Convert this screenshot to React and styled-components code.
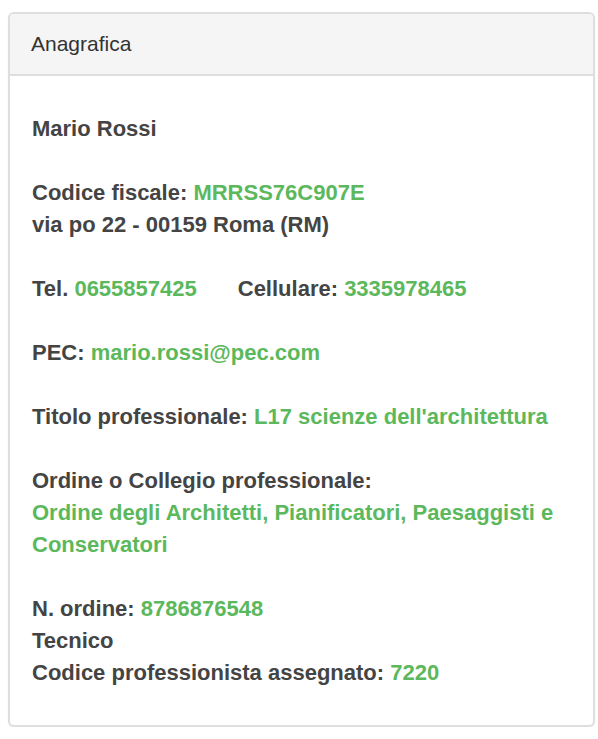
import styled, { createGlobalStyle } from 'styled-components';

const GlobalStyle = createGlobalStyle`
  html, body {
    margin: 0;
    padding: 0;
    background: #ffffff;
  }
  body {
    font-family: "Liberation Sans", Arial, sans-serif;
  }
`

const Panel = styled.section`
  box-sizing: border-box;
  width: 587px;
  margin: 12px 0 0 8px;
  border: 2px solid #dedede;
  border-radius: 6px;
  box-shadow: 0 1px 2px rgba(0, 0, 0, 0.06);
  background: #fff;
  overflow: hidden;
`

const PanelHeading = styled.header`
  box-sizing: border-box;
  height: 62px;
  padding: 0 21px;
  display: flex;
  align-items: center;
  background: #f5f5f5;
  border-bottom: 2px solid #dedede;
  color: #333;
  font-size: 21px;
`

const PanelBody = styled.div`
  padding: 37px 22px 36px;
  display: flex;
  flex-direction: column;
  gap: 32px;
  color: #444;
  font-size: 22px;
  font-weight: bold;
  line-height: 32px;
`

const Block = styled.div`
  display: flex;
  flex-direction: column;
`

const Line = styled.div`
  display: flex;
  flex-wrap: wrap;
`

const Field = styled.span`
  margin-left: ${({ $gap }) => $gap || 0};
  white-space: pre-wrap;
`

const Value = styled.span`
  color: #5cb85c;
`

const App = () => {
    return (
        <>
            <GlobalStyle />
            <Panel>
                <PanelHeading>Anagrafica</PanelHeading>
                <PanelBody>
                    <Block>
                        <Line>Mario Rossi</Line>
                    </Block>
                    <Block>
                        <Line>
                            <Field>Codice fiscale: <Value>MRRSS76C907E</Value></Field>
                        </Line>
                        <Line>via po 22 - 00159 Roma (RM)</Line>
                    </Block>
                    <Block>
                        <Line>
                            <Field>Tel. <Value>0655857425</Value></Field>
                            <Field $gap="41px">Cellulare: <Value>3335978465</Value></Field>
                        </Line>
                    </Block>
                    <Block>
                        <Line>
                            <Field>PEC: <Value>mario.rossi@pec.com</Value></Field>
                        </Line>
                    </Block>
                    <Block>
                        <Line>
                            <Field>Titolo professionale: <Value>L17 scienze dell'architettura</Value></Field>
                        </Line>
                    </Block>
                    <Block>
                        <Line>Ordine o Collegio professionale:</Line>
                        <Value>Ordine degli Architetti, Pianificatori, Paesaggisti e Conservatori</Value>
                    </Block>
                    <Block>
                        <Line>
                            <Field>N. ordine: <Value>8786876548</Value></Field>
                        </Line>
                        <Line>Tecnico</Line>
                        <Line>
                            <Field>Codice professionista assegnato: <Value>7220</Value></Field>
                        </Line>
                    </Block>
                </PanelBody>
            </Panel>
        </>
    )
}

export default App;
